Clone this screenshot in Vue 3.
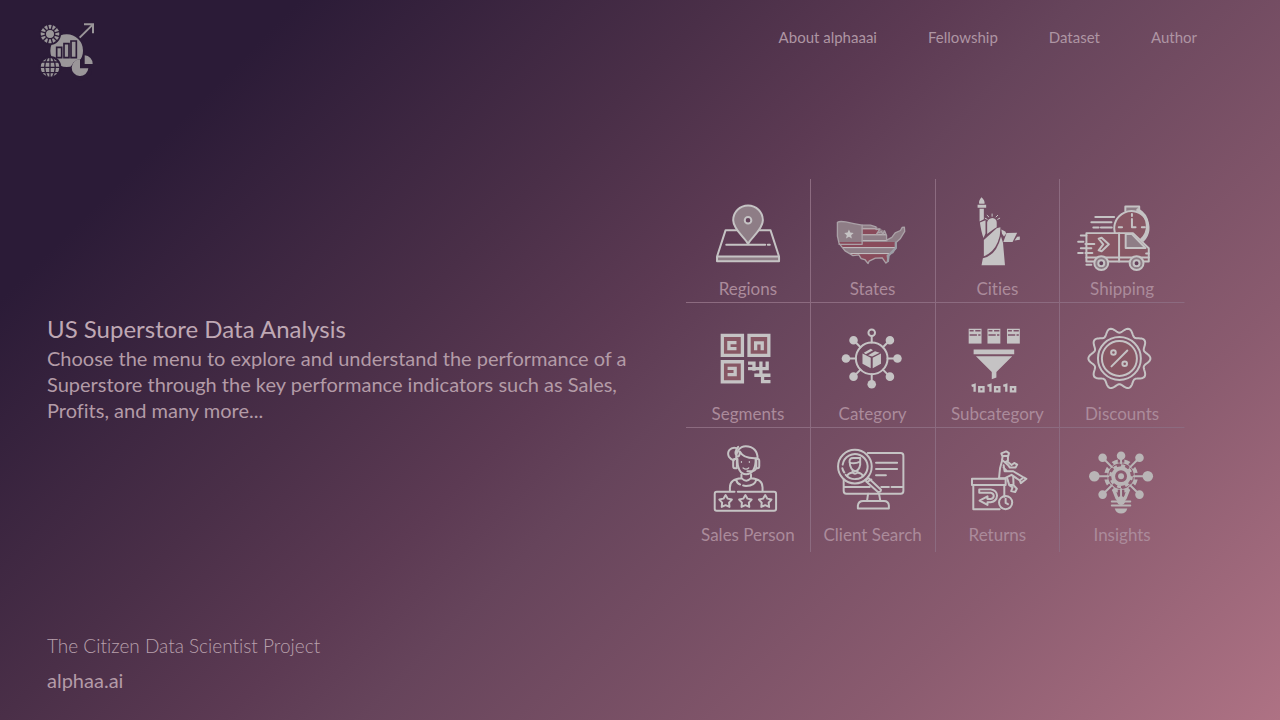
<script setup>
const navLinks = ['About alphaaai', 'Fellowship', 'Dataset', 'Author']

const polar = (cx, cy, r, deg) => {
  const a = (deg * Math.PI) / 180
  return [cx + r * Math.cos(a), cy + r * Math.sin(a)]
}
const toPath = (pts) => 'M' + pts.map((p) => p.map((n) => n.toFixed(1)).join(' ')).join('L') + 'Z'

const badge = toPath(
  Array.from({ length: 180 }, (_, i) => {
    const r = 86 + 8 * Math.cos((10 * i * 2 * Math.PI) / 180)
    return polar(555, 165, r, i * 2)
  })
)
const star = (cx, cy, R, r) =>
  toPath(Array.from({ length: 10 }, (_, i) => polar(cx, cy, i % 2 ? r : R, -90 + i * 36)))
const spokes = Array.from({ length: 12 }, (_, i) => i * 30)
const eighths = Array.from({ length: 8 }, (_, i) => i * 45)
</script>

<template>
  <div class="page">
    <header class="top">
      <a href="#" class="logo" aria-label="alphaa.ai home">
        <svg viewBox="0 0 240 210" aria-hidden="true">
          <circle cx="110" cy="107" r="49" class="solid" />
          <circle cx="60" cy="57" r="33" class="bg" />
          <circle cx="60" cy="57" r="28" class="solid" />
          <circle cx="60" cy="57" r="14" class="ln-bg" />
          <path v-for="a in spokes" :key="a" d="M60 44V26" class="ln-bg" :transform="`rotate(${a + 15} 60 57)`" />
          <circle cx="60" cy="157" r="34" class="bg" />
          <circle cx="60" cy="157" r="28" class="solid" />
          <path d="M60 127V187M30 157H90M36 141H84M36 173H84M52 129Q36 157 52 185M68 129Q84 157 68 185" class="ln-bg" />
          <path d="M80 97H95V128H80ZM102 86H117V128H102ZM123 78H139V128H123Z" class="ln-bg bars" />
          <path d="M152 132A32 32 0 1 0 186 164H152Z" class="bg" />
          <path d="M150 133A25 25 0 1 0 175 160H150Z" class="solid" />
          <path d="M164 121V147H188A25 25 0 0 0 164 121Z" class="solid" />
          <path d="M149 68L189 28M162 28H189V55" class="ln arrow" />
        </svg>
      </a>
      <nav class="nav" aria-label="Main">
        <a v-for="n in navLinks" :key="n" href="#">{{ n }}</a>
      </nav>
    </header>

    <main class="main">
      <section class="intro">
        <h1>US Superstore Data Analysis</h1>
        <p>Choose the menu to explore and understand the performance of a Superstore through the key performance indicators such as Sales, Profits, and many more...</p>
      </section>

      <nav class="menu" aria-label="Analysis">
        <a href="#" class="cell">
          <svg viewBox="0 0 375 291" aria-hidden="true">
            <path d="M94 232H282V246H94Z" class="grey" />
            <path d="M120 152H256L282 232V246H94V232ZM94 232H282M122 196H240M248 196H254" class="ln" />
            <path d="M188 194C180 176 143 150 143 122A45 45 0 0 1 233 122C233 150 196 176 188 194Z" class="grey ln" />
            <circle cx="188" cy="122" r="10" class="hole ln" />
          </svg>
          <span>Regions</span>
        </a>
        <a href="#" class="cell">
          <svg viewBox="375 0 375 291" aria-hidden="true">
            <defs>
              <clipPath id="usa">
                <path d="M455 128Q462 124 480 127Q505 133 530 137L555 137L572 142L584 148L598 154L604 168V182L620 174L630 160L646 153L651 144L658 143L659 156L646 177L632 190V206L623 220L606 228L608 246L602 252L591 236L570 237L551 246L548 253L538 241L527 238L520 227L502 229L478 215L460 192L455 170Z" />
              </clipPath>
            </defs>
            <g clip-path="url(#usa)">
              <path d="M450 120H665V260H450Z" class="grey" />
              <path d="M530 148H580V165H530ZM450 188H635V204H450ZM450 224H620V260H450Z" class="red" />
              <path d="M530 148H572M530 166H603M530 184H605M450 205H640M450 223H640" class="ln thin" />
            </g>
            <path d="M455 128Q462 124 480 127Q505 133 530 137L555 137L572 142L572 150L584 148L574 163L588 156L593 164L598 154L604 168V182L620 174L630 160L646 153L651 144L658 143L659 156L646 177L632 190V206L623 220L606 228L608 246L602 252L591 236L570 237L551 246L548 253L538 241L527 238L520 227L502 229L478 215L460 192L455 170Z" class="ln outline" />
            <path d="M530 137V195H460" class="ln outline" />
            <path d="M632 190V206L610 229L608 246" class="ln shade" />
            <path :d="star(490, 165, 15, 7)" class="solid" />
          </svg>
          <span>States</span>
        </a>
        <a href="#" class="cell">
          <svg viewBox="0 0 375 291" aria-hidden="true">
            <path d="M138 52Q128 63 131 72H147Q149 62 138 52ZM126 75H152V84H126ZM132 87H145V119L132 126Z" class="solid" />
            <path d="M133 129L150 122V162L144 176Q137 158 133 129ZM155 158V128Q158 116 171 115Q184 117 184 129V143Q175 147 155 164Z" class="solid" />
            <path d="M145 182L184 146L195 143Q196 169 187 189Q174 220 145 231ZM197 171L203 190L209 258H138L142 237Q183 229 197 171Z" class="solid" />
            <path d="M198 150L210 156L213 162L206 171L200 163ZM214 161L246 160L232 188H204ZM246 172L254 171L254 181L238 183Z" class="solid" />
            <path d="M149 116L155 119M155 107L160 112M170 103V110M187 107L182 112M193 116L187 119" class="ln thin" />
          </svg>
          <span>Cities</span>
        </a>
        <a href="#" class="cell">
          <svg viewBox="375 0 375 291" aria-hidden="true">
            <path d="M573 94V80H615V94" class="ln grey" />
            <path d="M541 159A52 52 0 1 1 627 184" class="pink ln" />
            <path d="M611 91A56 56 0 0 1 619 184" class="ln heavy" />
            <path d="M593 103V109M593 118V143H604M553 143H563M623 143H632" class="ln" />
            <path d="M482 112H539M470 128H531M476 144H492M499 144H532" class="ln" />
            <path d="M455 247V161H596L644 207V247Z" class="pink ln" />
            <path d="M574 164H593L634 206H574Z" class="grey ln" />
            <path d="M554 161V247M455 235H644M636 223H644M603 206H620" class="ln" />
            <path d="M438 168H455M430 187H446M452 194H479M430 221H444M452 221H473M438 207H470M455 257H470" class="ln" />
            <path d="M492 178L501 175L523 195L501 216L492 213L506 195Z" class="ln" />
            <circle cx="500" cy="252" r="21" class="grey ln" />
            <circle cx="500" cy="252" r="9" class="hole ln" />
            <circle cx="607" cy="252" r="21" class="grey ln" />
            <circle cx="607" cy="252" r="9" class="hole ln" />
          </svg>
          <span>Shipping</span>
        </a>

        <a href="#" class="cell">
          <svg viewBox="0 0 375 291" aria-hidden="true">
            <path d="M110 95H171V156H110ZM191 95H251V156H191ZM110 175H171V236H110Z" class="pink qr" />
            <path d="M153 117H130V135H153M211 140V118H231V140M126 195H149V214H126" class="ln qr" />
            <path d="M188 179H206V202M188 196H227V216H207M227 174V202M246 174V196H218M227 216H256M256 235H232V216" class="ln qr" />
          </svg>
          <span>Segments</span>
        </a>
        <a href="#" class="cell">
          <svg viewBox="375 0 375 291" aria-hidden="true">
            <circle cx="559" cy="165" r="48" class="ln" />
            <g v-for="a in eighths" :key="a" :transform="`rotate(${a} 559 165)`">
              <path d="M559 117V99" class="ln" />
              <circle v-if="a" cx="559" cy="87" r="13" class="solid" />
              <circle v-else cx="559" cy="87" r="10" class="ln" />
            </g>
            <path d="M531 150L556 163V195L531 181ZM562 163L587 150V181L562 195ZM535 148L556 136L563 140L541 152ZM548 155L569 143L583 148L560 159Z" class="solid" />
          </svg>
          <span>Category</span>
        </a>
        <a href="#" class="cell">
          <svg viewBox="0 0 375 291" aria-hidden="true">
            <g v-for="x in [99, 156, 215]" :key="x" :transform="`translate(${x} 75)`">
              <path d="M0 0H39V45H0Z" class="solid" />
              <path d="M3 6H15M20 6H36M3 19H25M29 19H36" class="ln-cut" />
            </g>
            <path d="M114 138H237V152H114ZM121 158H231L183 206V223L169 228V206Z" class="solid" />
            <g v-for="x in [108, 156, 204]" :key="'b' + x" :transform="`translate(${x} 242)`">
              <path d="M0 6L9 3V24" class="ln digit" />
              <path d="M23 10H36V23H23Z" class="ln digit" />
            </g>
          </svg>
          <span>Subcategory</span>
        </a>
        <a href="#" class="cell">
          <svg viewBox="375 0 375 291" aria-hidden="true">
            <path :d="badge" class="ln" />
            <circle cx="555" cy="165" r="65" class="ln" />
            <circle cx="555" cy="165" r="53" class="pink ln" />
            <path d="M531 189L579 141" class="ln" />
            <circle cx="537" cy="147" r="7" class="ln" />
            <circle cx="571" cy="181" r="7" class="ln" />
          </svg>
          <span>Discounts</span>
        </a>

        <a href="#" class="cell">
          <svg viewBox="0 0 375 291" aria-hidden="true">
            <path d="M152 91C151 68 163 52 181 52C204 52 218 68 217 91M154 58C134 52 123 70 130 84Q134 91 145 95M158 54Q145 70 153 82Q163 88 163 68Q175 91 216 88" class="ln" />
            <path d="M156 91C155 118 164 137 182 137C201 137 212 118 211 91" class="ln" />
            <path d="M154 91H147Q143 91 143 97V112Q143 119 148 119H154ZM213 91H218Q222 91 222 97V112Q222 119 217 119H213ZM213 119Q210 128 196 128M186 128H196" class="ln" />
            <path d="M168 99V101M192 99V101M173 118Q182 125 190 118" class="ln face" />
            <path d="M168 138V149Q183 164 197 149V138M168 149Q133 151 133 177V187M197 149Q232 151 232 177V187M152 153Q154 165 164 168M213 154Q209 172 182 173Q176 173 173 171" class="ln" />
            <path d="M147 190H93Q87 190 87 197V242Q87 248 93 248H267Q273 248 273 242V197Q273 190 267 190H157" class="ln" />
            <path v-for="x in [120, 180, 240]" :key="x" :d="star(x, 220, 20, 11)" class="ln" />
          </svg>
          <span>Sales Person</span>
        </a>
        <a href="#" class="cell">
          <svg viewBox="375 0 375 291" aria-hidden="true">
            <circle cx="508" cy="114" r="51" class="ln" />
            <path d="M471 108A38 38 0 1 1 480 139M476 132Q471 125 470 119" class="ln" />
            <path d="M547 73H647Q655 73 655 81V188Q655 196 647 196H482Q474 196 474 188V153M474 176H553M588 176H611M619 176H655M572 102H636M572 121H636M572 140H602" class="ln" />
            <path d="M540 154L550 149L587 184Q588 191 578 191L543 160ZM548 159L558 153" class="ln" />
            <path d="M492 101Q490 88 503 88H524V108Q521 126 508 128Q494 123 492 101ZM492 102Q507 107 524 99M501 126V132Q508 139 516 132V126M484 143Q487 134 501 132M516 132Q529 134 533 143" class="ln" />
            <path d="M548 196L545 217M581 196L585 217M517 241V232Q519 218 533 218H596Q610 218 611 232V241Z" class="ln" />
          </svg>
          <span>Client Search</span>
        </a>
        <a href="#" class="cell">
          <svg viewBox="0 0 375 291" aria-hidden="true">
            <path d="M109 151H211V170H109ZM113 170V243H193M207 170V205" class="ln box" />
            <path d="M131 183H166Q184 186 185 202Q184 219 166 222H156V230L132 217L156 204V212H166Q175 210 175 202Q174 194 166 193H131Z" class="ln" />
            <circle cx="211" cy="223" r="20" class="ln" />
            <path d="M211 211V224L218 228" class="ln" />
            <path d="M198 74L213 68L221 73L219 82H201ZM202 83L200 94L209 101L218 96V83" class="ln" />
            <path d="M200 97L194 119L191 149H209L229 139L254 156L257 164L274 151L266 147L234 128H208L205 110M209 101L218 109L224 117L241 117L246 108L237 103L229 109L218 100M205 117L215 128H229" class="ln" />
            <path d="M216 150L222 170L232 177L228 188L240 191L245 181L235 170L234 145M222 170H235M254 156L262 149" class="ln" />
          </svg>
          <span>Returns</span>
        </a>
        <a href="#" class="cell">
          <svg viewBox="375 0 375 291" aria-hidden="true" class="dim">
            <circle cx="560" cy="143" r="45" class="ln ring" />
            <path d="M535 178L548 210M585 178L572 210" class="ln heavy" />
            <circle cx="560" cy="143" r="24" class="ln gear" />
            <circle cx="560" cy="143" r="32" class="ln teeth" />
            <circle cx="560" cy="143" r="9" class="solid" />
            <g v-for="a in eighths" :key="a" :transform="`rotate(${a} 560 143)`">
              <path d="M560 102V84" class="ln-gap" />
              <path d="M560 104V76" class="ln box" />
              <circle cx="560" :cy="a === 90 || a === 270 ? 62 : a % 90 ? 64 : a ? 69 : 81" :r="a === 90 || a === 270 ? 16 : 13" class="solid" />
            </g>
            <path d="M532 220H588M532 232H588" class="ln box" />
            <path d="M541 241H579Q575 256 560 256Q545 256 541 241Z" class="solid" />
          </svg>
          <span>Insights</span>
        </a>
      </nav>
    </main>

    <footer class="foot">
      <p>The Citizen Data Scientist Project</p>
      <a href="#">alphaa.ai</a>
    </footer>
  </div>
</template>

<style>
body {
  background: #2c1c38;
}
</style>

<style scoped>
.page {
  --ink: #c5c3c4;
  min-height: 100vh;
  display: flex;
  flex-direction: column;
  box-sizing: border-box;
  background: linear-gradient(135deg, #2b1b37 0%, #2b1b37 15%, #4a2f48 36%, #5c3a53 47%, #66445b 54%, #8a5b6f 79%, #ae7284 100%);
  color: #b39ba7;
  font-family: Lato, "Noto Sans", sans-serif;
  font-variant-ligatures: none;
}
a {
  color: inherit;
  text-decoration: none;
}
.top {
  display: flex;
  justify-content: space-between;
  align-items: flex-start;
  padding: 15px 83px 15px 30px;
}
.logo {
  width: 80px;
  --ink: #9a9699;
}
.logo svg,
.cell svg {
  display: block;
  width: 100%;
}
.cell svg {
  margin-top: 1px;
}
.nav {
  display: flex;
  gap: 51px;
  margin-top: 12px;
  font-size: 15px;
  line-height: 20px;
  color: #ae95a3;
}
.main {
  flex: 1;
  display: grid;
  grid-template-columns: minmax(0, 591fr) minmax(0, 499fr);
  column-gap: 48px;
  align-items: center;
  padding: 0 95px 0 47px;
}
.intro {
  padding-top: 6px;
}
h1 {
  margin: 0;
  font-size: 24px;
  line-height: 32px;
  font-weight: 400;
  color: #bfa8b4;
}
.intro p {
  margin: 0;
  font-size: 20px;
  line-height: 26px;
}
.menu {
  display: grid;
  grid-template-columns: repeat(4, minmax(0, 1fr));
  padding-top: 2px;
}
.cell {
  display: flex;
  flex-direction: column;
  border-right: 1px solid #8c6b80;
  border-bottom: 1px solid #8c6b80;
  text-align: center;
  font-size: 17px;
  line-height: 26px;
  color: #ab8b9b;
}
.cell:nth-child(4n) {
  border-right-color: transparent;
}
.cell:nth-child(n + 9) {
  border-bottom: 0;
  padding-bottom: 4px;
}
.cell:nth-child(n + 9) span {
  margin-top: -3px;
}
.foot {
  display: flex;
  flex-direction: column;
  padding: 0 47px 23px;
  font-size: 20px;
  line-height: 34px;
}
.foot p {
  margin: 0;
  font-size: 19px;
  font-weight: 300;
  color: #b8a0ac;
}
.dim {
  --ink: #b9b5b6;
}
.solid {
  fill: var(--ink);
}
.ln {
  fill: none;
  stroke: var(--ink);
  stroke-width: 6;
  stroke-linecap: round;
  stroke-linejoin: round;
}
.thin {
  stroke-width: 3;
}
.face {
  stroke-width: 4;
}
.outline {
  stroke-width: 4;
  stroke: #aaa1a7;
}
.shade {
  stroke-width: 7;
  stroke: #9b9da5;
}
.ln.grey,
.grey {
  fill: #8e7d86;
}
.ln.pink {
  fill: #875764;
}
.red {
  fill: #894b5b;
}
.ln.hole {
  fill: #63415a;
}
.bg {
  fill: #2b1b37;
}
.ln-bg {
  fill: none;
  stroke: #2b1b37;
  stroke-width: 4;
}
.bars {
  stroke-width: 5;
}
.arrow {
  stroke-width: 6;
  stroke-linecap: butt;
  stroke-linejoin: miter;
}
.heavy {
  stroke-width: 10;
}
.box {
  stroke-width: 6;
}
.pink {
  fill: #875764;
}
.qr {
  stroke: var(--ink);
  stroke-width: 10;
  stroke-linecap: butt;
  stroke-linejoin: miter;
}
.ln-cut {
  fill: none;
  stroke: #7c5369;
  stroke-width: 4;
}
.digit {
  stroke-width: 7;
  stroke-linecap: butt;
  stroke-linejoin: miter;
}
.ring {
  stroke-width: 12;
  stroke-linecap: butt;
}
.gear {
  stroke-width: 12;
}
.teeth {
  stroke-width: 8;
  stroke-linecap: butt;
  stroke-dasharray: 12 13;
}
.ln-gap {
  stroke: #88596f;
  stroke-width: 20;
}
</style>
